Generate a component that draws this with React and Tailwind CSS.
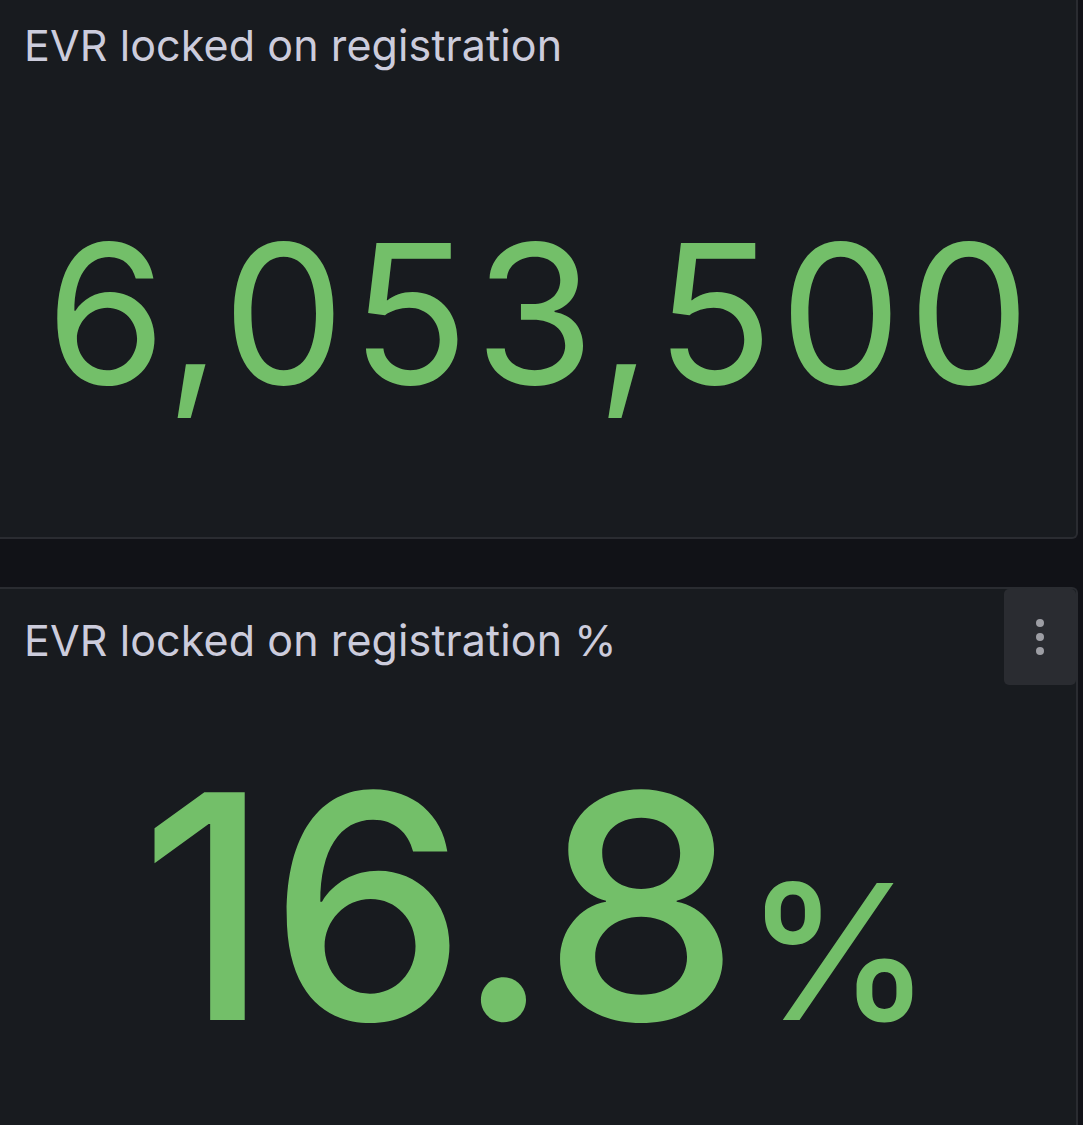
export default function App() {
  return (
    <div className="flex h-[1125px] w-[1083px] flex-col overflow-hidden bg-[#111217] font-['Inter',sans-serif]">
      <section className="flex h-[539px] w-[1078px] shrink-0 flex-col rounded-br-[6px] border-b-2 border-r-2 border-[#2a2c31] bg-[#181b1f]">
        <div className="flex h-[90px] items-center px-6">
          <h2 className="text-[43px] font-normal leading-none tracking-[0.1px] text-[#ccccdc]">EVR locked on registration</h2>
        </div>
        <div className="flex flex-1 items-center justify-center">
          <span className="pl-[6px] text-[194px] font-normal leading-none tracking-[6px] text-[#73bf69]">6,053,500</span>
        </div>
      </section>

      <div className="h-[48px] shrink-0" />

      <section className="flex w-[1078px] flex-1 flex-col rounded-tr-[6px] border-r-2 border-t-2 border-[#2a2c31] bg-[#181b1f]">
        <div className="flex h-[98px] items-start justify-between pl-6">
          <h2 className="mt-[30px] text-[43px] font-normal leading-none tracking-[0.1px] text-[#ccccdc]">EVR locked on registration %</h2>
          <button className="flex h-[96px] w-[72px] flex-col items-center justify-center gap-[6px] rounded-[5px] bg-[#2a2c31]">
            <span className="h-[8px] w-[8px] rounded-full bg-[#9d9ea4]" />
            <span className="h-[8px] w-[8px] rounded-full bg-[#9d9ea4]" />
            <span className="h-[8px] w-[8px] rounded-full bg-[#9d9ea4]" />
          </button>
        </div>
        <div className="flex flex-1 items-center justify-center pr-[4px]">
          <span className="flex items-baseline leading-none text-[#73bf69]">
            <span className="text-[313px] font-medium tracking-[-0.5px]">16.8</span>
            <span className="ml-[6px] text-[188px] font-medium">%</span>
          </span>
        </div>
      </section>
    </div>
  )
}
